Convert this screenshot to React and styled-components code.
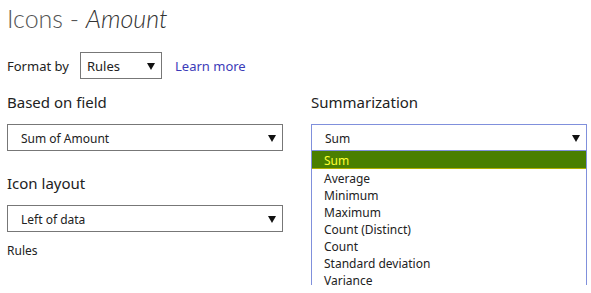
import React from 'react'
import styled, { createGlobalStyle } from 'styled-components'

const Global = createGlobalStyle`
  body {
    margin: 0;
    background: #fff;
    font-family: "Noto Sans", "Open Sans", sans-serif;
    color: #222;
  }
`

const Page = styled.div`
  position: relative;
  width: 591px;
  height: 293px;
  overflow: hidden;
  padding: 0 7px;
  box-sizing: border-box;
`

const Title = styled.h1`
  margin: 0;
  padding-top: 3px;
  height: 40px;
  font-family: "Lato", "Noto Sans", sans-serif;
  font-weight: 300;
  font-size: 25px;
  line-height: 30px;
  color: #555;
  & em {
    font-style: italic;
    color: #333;
  }
`

const FormatRow = styled.div`
  display: flex;
  align-items: center;
  height: 27px;
  margin-top: 9px;
  font-size: 13px;
`

const FormatLabel = styled.span`
  width: 73px;
`

const LearnMore = styled.a`
  margin-left: 13px;
  color: #3b3bb8;
  text-decoration: none;
  font-size: 13px;
`

const Columns = styled.div`
  display: grid;
  grid-template-columns: 276px 276px;
  column-gap: 28px;
  margin-top: 10px;
`

const Column = styled.div`
  position: relative;
  display: flex;
  flex-direction: column;
`

const Heading = styled.div`
  font-size: 15px;
  line-height: 26px;
  height: 35px;
  color: #222;
`

const SelectBox = styled.div`
  position: relative;
  box-sizing: border-box;
  display: flex;
  align-items: center;
  width: ${(p) => p.width || '276px'};
  height: 27px;
  padding-left: ${(p) => (p.small ? '6px' : '13px')};
  padding-top: 1px;
  border: 1px solid ${(p) => (p.focused ? '#8090dc' : '#777')};
  font-size: ${(p) => (p.small ? '13px' : '12px')};
  color: #222;
  background: #fff;
`

const Arrow = styled.svg`
  position: absolute;
  right: 6px;
  top: 50%;
  margin-top: -3px;
`

const Gap = styled.div`
  height: ${(p) => p.h}px;
`

const SmallText = styled.div`
  font-size: 12px;
  line-height: 20px;
`

const DropList = styled.ul`
  position: absolute;
  top: 151px;
  width: 276px;
  height: 134px;
  margin: 0;
  padding: 0;
  list-style: none;
  box-sizing: border-box;
  border: 1px solid #8090dc;
  border-top: none;
  border-bottom: none;
  overflow: hidden;
  background: #fff;
  z-index: 2;
`

const DropItem = styled.li`
  box-sizing: border-box;
  height: ${(p) => (p.selected ? '18px' : '17px')};
  line-height: 20px;
  font-size: 12px;
  color: ${(p) => (p.selected ? '#ffff33' : '#222')};
  background: ${(p) => (p.selected ? '#4a7f00' : 'transparent')};
  border-bottom: ${(p) => (p.selected ? '1px solid #b0b000' : 'none')};
  margin: ${(p) => (p.selected ? '0 -1px 0 -1px' : '0')};
  padding-left: ${(p) => (p.selected ? '13px' : '12px')};
`

const Caret = () => (
  <Arrow width="8" height="7" viewBox="0 0 8 7">
    <polygon points="0,0 8,0 4,7" fill="#111" />
  </Arrow>
)

const Select = ({ children, ...rest }) => (
  <SelectBox {...rest}>
    {children}
    <Caret />
  </SelectBox>
)

const options = [
  'Sum',
  'Average',
  'Minimum',
  'Maximum',
  'Count (Distinct)',
  'Count',
  'Standard deviation',
  'Variance',
]

export default function App() {
  return (
    <Page>
      <Global />
      <Title>
        Icons - <em>Amount</em>
      </Title>
      <FormatRow>
        <FormatLabel>Format by</FormatLabel>
        <Select width="82px" small>Rules</Select>
        <LearnMore href="#">Learn more</LearnMore>
      </FormatRow>
      <Columns>
        <Column>
          <Heading>Based on field</Heading>
          <Select>Sum of Amount</Select>
          <Gap h={19} />
          <Heading>Icon layout</Heading>
          <Select>Left of data</Select>
          <Gap h={9} />
          <SmallText>Rules</SmallText>
        </Column>
        <Column>
          <Heading>Summarization</Heading>
          <Select focused>Sum</Select>
        </Column>
      </Columns>
      <DropList style={{ left: 311 }}>
        {options.map((o, i) => (
          <DropItem key={o} selected={i === 0}>
            {o}
          </DropItem>
        ))}
      </DropList>
    </Page>
  )
}
